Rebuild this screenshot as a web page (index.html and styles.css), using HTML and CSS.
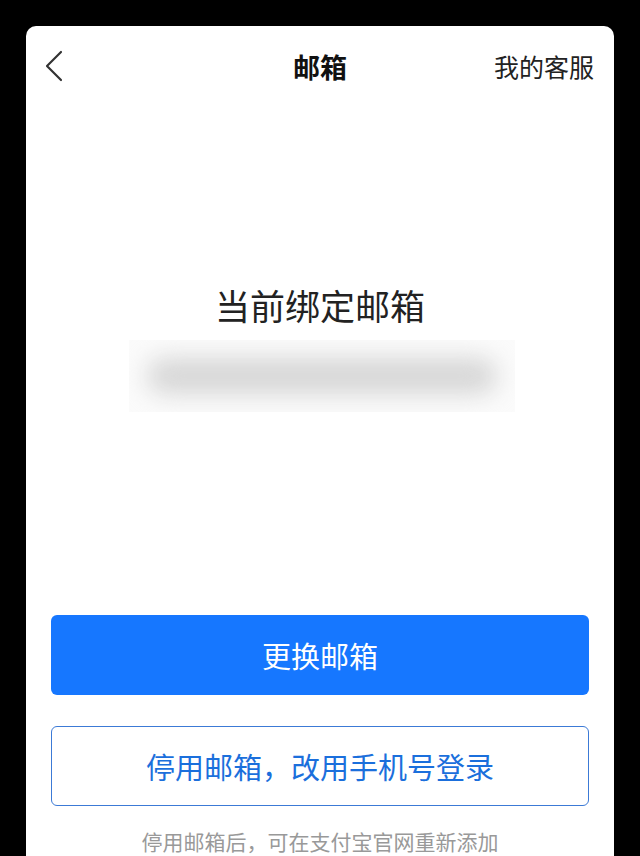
FILE: index.html
```html
<!DOCTYPE html>
<html lang="zh-CN">
<head>
  <meta charset="UTF-8">
  <meta name="viewport" content="width=device-width, initial-scale=1.0">
  <title>邮箱</title>
  <link rel="stylesheet" href="styles.css">
</head>
<body>
  <div class="card">
    <div class="header">
      <a class="back" href="#">
        <svg width="20" height="32" viewBox="0 0 20 32">
          <polyline points="17,2 3,16 17,30" fill="none" stroke="#333" stroke-width="2.2" stroke-linecap="round" stroke-linejoin="round"/>
        </svg>
      </a>
      <h1 class="title">邮箱</h1>
      <a class="service" href="#">我的客服</a>
    </div>

    <div class="current">
      <h2>当前绑定邮箱</h2>
      <div class="email-mask">
        <div class="email-blur"></div>
      </div>
    </div>

    <div class="actions">
      <button class="btn btn-primary">更换邮箱</button>
      <button class="btn btn-outline">停用邮箱，改用手机号登录</button>
      <p class="hint">停用邮箱后，可在支付宝官网重新添加</p>
    </div>
  </div>
</body>
</html>
```

FILE: styles.css
```css
body {
  margin: 0;
  background: #000;
  font-family: "Noto Sans CJK SC", "Noto Sans", sans-serif;
  height: 856px;
  overflow: hidden;
}

.card {
  margin: 26px 26px 0;
  background: #fff;
  border-radius: 10px 10px 0 0;
  height: 830px;
  overflow: hidden;
}

.header {
  height: 84px;
  display: flex;
  align-items: center;
  justify-content: space-between;
  padding: 0 20px 4px 18px;
  box-sizing: border-box;
  position: relative;
}

.back {
  display: flex;
  align-items: center;
}

.title {
  position: absolute;
  left: 0;
  right: 0;
  text-align: center;
  margin: 0;
  font-size: 27px;
  font-weight: bold;
  color: #111;
  pointer-events: none;
}

.service {
  font-size: 25px;
  color: #222;
  text-decoration: none;
}

.current {
  display: flex;
  flex-direction: column;
  align-items: center;
  padding-top: 171px;
}

.current h2 {
  margin: 0;
  font-size: 35px;
  font-weight: normal;
  line-height: 48px;
  color: #222;
}

.email-mask {
  margin: 11px 0 0 4px;
  width: 386px;
  height: 72px;
  background: #fbfbfb;
  overflow: hidden;
  display: flex;
  align-items: center;
  justify-content: center;
}

.email-blur {
  width: 350px;
  height: 36px;
  background: #d6d6d6;
  border-radius: 18px;
  filter: blur(12px);
}

.actions {
  padding: 203px 25px 0;
  display: flex;
  flex-direction: column;
}

.btn {
  height: 80px;
  border-radius: 6px;
  font-family: inherit;
  font-size: 29px;
  cursor: pointer;
}

.btn-primary {
  background: #1677ff;
  color: #fff;
  border: none;
}

.btn-outline {
  margin-top: 31px;
  background: #fff;
  color: #1b6fdc;
  border: 1.5px solid #3c7ad6;
}

.hint {
  margin: 20px 0 0;
  text-align: center;
  font-size: 21px;
  line-height: 30px;
  color: #999;
}
```
